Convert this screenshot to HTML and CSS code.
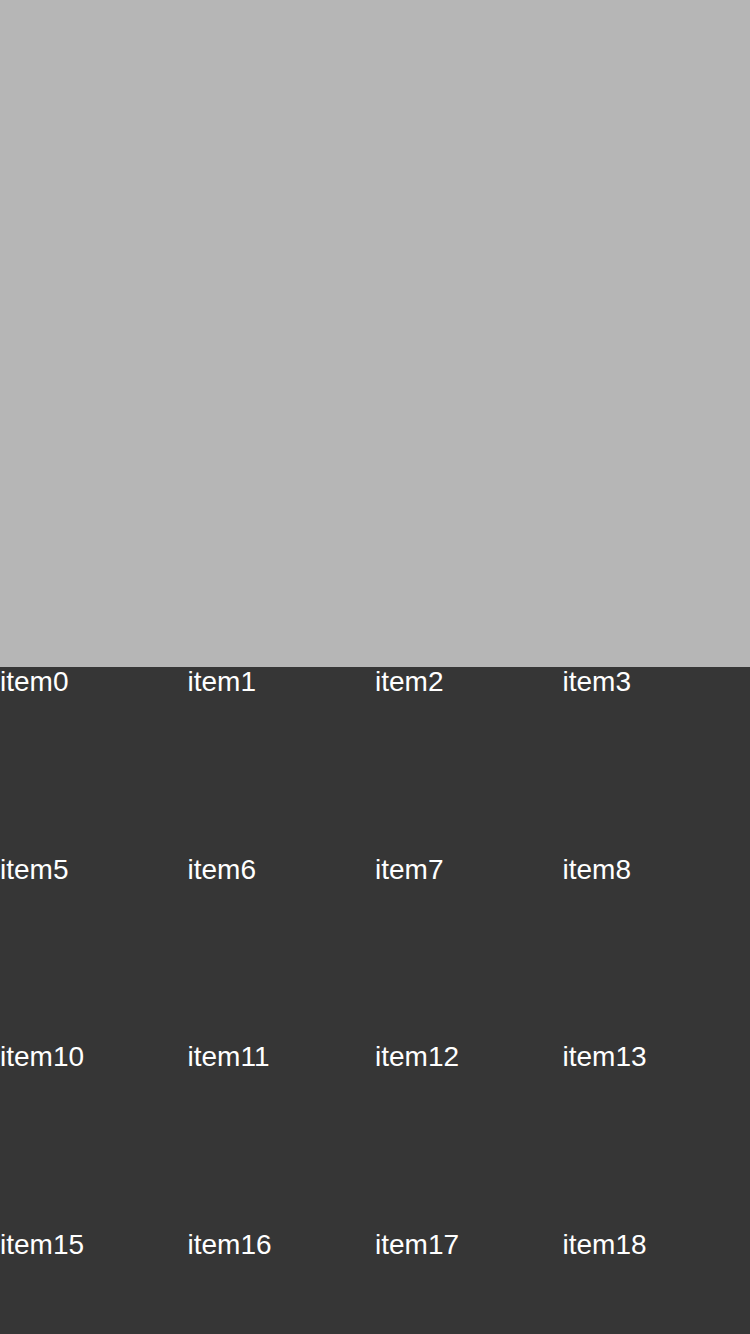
FILE: index.html
```html
<!DOCTYPE html>
<html>
<head>
<meta charset="utf-8">
<link rel="stylesheet" href="styles.css">
</head>
<body>
<div class="page">
  <div class="hero"></div>
  <div class="grid">
    <div class="cell">item0</div><div class="cell">item1</div><div class="cell">item2</div><div class="cell">item3</div>
    <div class="cell">item5</div><div class="cell">item6</div><div class="cell">item7</div><div class="cell">item8</div>
    <div class="cell">item10</div><div class="cell">item11</div><div class="cell">item12</div><div class="cell">item13</div>
    <div class="cell">item15</div><div class="cell">item16</div><div class="cell">item17</div><div class="cell">item18</div>
  </div>
</div>
</body>
</html>
```
FILE: styles.css
```css
html, body {
  margin: 0;
  padding: 0;
  width: 750px;
  height: 1334px;
  overflow: hidden;
}
.page {
  width: 750px;
  height: 1334px;
  overflow: hidden;
  display: flex;
  flex-direction: column;
  font-family: "Liberation Sans", Arial, sans-serif;
}
.hero {
  height: 667px;
  flex: none;
  background: #b6b6b6;
}
.grid {
  flex: 1;
  background: #363636;
  display: grid;
  grid-template-columns: repeat(4, 187.5px);
  grid-auto-rows: 187.5px;
  overflow: hidden;
}
.cell {
  color: #ffffff;
  font-size: 28px;
  line-height: 29px;
}
```
